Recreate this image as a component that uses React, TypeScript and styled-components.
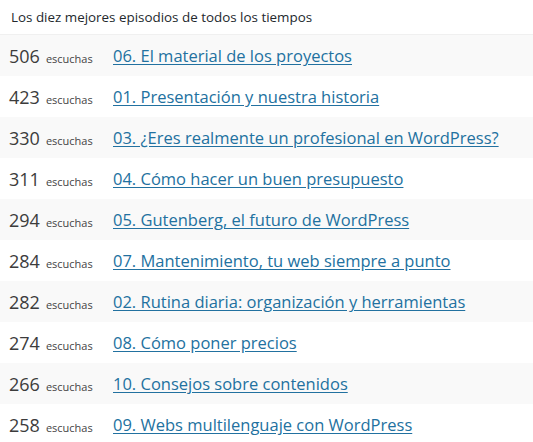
import React from "react";
import styled, { createGlobalStyle } from "styled-components";

const Global = createGlobalStyle`
  html, body { margin: 0; padding: 0; background: #fff; }
  body { font-family: "Open Sans", "Noto Sans", sans-serif; color: #32373c; }
`;

const Panel = styled.div`
  width: 533px;
  background: #fff;
`;

const Title = styled.h2`
  margin: 0;
  height: 35px;
  box-sizing: border-box;
  padding: 8px 11px 0;
  font-size: 13.4px;
  font-weight: 400;
  color: #23282d;
  border-bottom: 1px solid #f0f0f0;
`;

const List = styled.ol`
  list-style: none;
  margin: 0;
  padding: 0;
`;

const Row = styled.li<{ $striped: boolean }>`
  display: flex;
  align-items: center;
  height: 41px;
  padding-left: 9px;
  background: ${(p) => (p.$striped ? "#f9f9f9" : "#fff")};
`;

const Count = styled.span`
  display: flex;
  align-items: baseline;
  width: 104px;
  flex-shrink: 0;
`;

const Num = styled.span`
  font-size: 18px;
  color: #3c3c3c;
`;

const Unit = styled.span`
  font-size: 11px;
  color: #444;
  margin-left: 6px;
`;

const Link = styled.a`
  font-size: 16.5px;
  color: #2271a0;
  text-decoration: underline;
  text-underline-offset: 2px;
  white-space: nowrap;
`;

const items: [number, string][] = [
  [506, "06. El material de los proyectos"],
  [423, "01. Presentación y nuestra historia"],
  [330, "03. ¿Eres realmente un profesional en WordPress?"],
  [311, "04. Cómo hacer un buen presupuesto"],
  [294, "05. Gutenberg, el futuro de WordPress"],
  [284, "07. Mantenimiento, tu web siempre a punto"],
  [282, "02. Rutina diaria: organización y herramientas"],
  [274, "08. Cómo poner precios"],
  [266, "10. Consejos sobre contenidos"],
  [258, "09. Webs multilenguaje con WordPress"],
];

export default function App() {
  return (
    <Panel>
      <Global />
      <Title>Los diez mejores episodios de todos los tiempos</Title>
      <List>
        {items.map(([n, t], i) => (
          <Row key={t} $striped={i % 2 === 0}>
            <Count>
              <Num>{n}</Num>
              <Unit>escuchas</Unit>
            </Count>
            <Link href="#">{t}</Link>
          </Row>
        ))}
      </List>
    </Panel>
  );
}
